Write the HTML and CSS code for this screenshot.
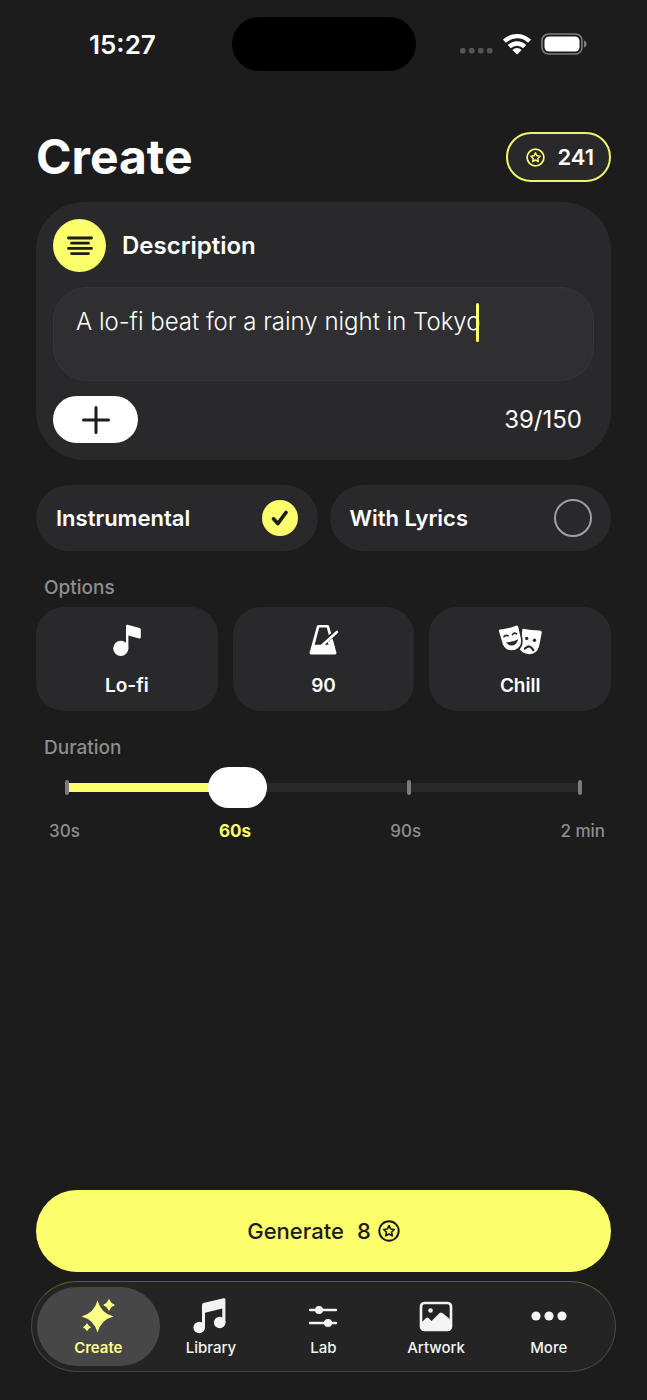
FILE: index.html
```html
<!DOCTYPE html>
<html lang="en">
<head>
<meta charset="utf-8">
<meta name="viewport" content="width=device-width, initial-scale=1">
<title>Create</title>
<link rel="stylesheet" href="styles.css">
</head>
<body>
<svg class="defs" aria-hidden="true">
  <symbol id="coin" viewBox="0 0 22 22">
    <circle cx="11" cy="11" r="9.7" fill="none" stroke="currentColor" stroke-width="2"/>
    <path d="M11 5.600l1.600 3.400 3.700.5-2.700 2.600.7 3.700-3.300-1.900-3.300 1.900.7-3.700-2.700-2.600 3.700-.5z" fill="none" stroke="currentColor" stroke-width="1.700" stroke-linejoin="round"/>
  </symbol>
</svg>
<div class="screen">
  <header class="status">
    <time class="status-time">15:27</time>
    <div class="island"></div>
    <div class="status-icons">
      <svg width="33" height="22" viewBox="0 0 33 22" fill="#555557" aria-hidden="true">
        <rect x="0" y="15" width="5.500" height="5.500" rx="1.800"/><rect x="9" y="15" width="5.500" height="5.500" rx="1.800"/><rect x="18" y="15" width="5.500" height="5.500" rx="1.800"/><rect x="27" y="15" width="5.500" height="5.500" rx="1.800"/>
      </svg>
      <svg width="28" height="22" viewBox="0 0 28 22" aria-hidden="true">
        <g fill="none" stroke="#fff" stroke-width="4.400"><path d="M1.500 8.200a18 18 0 0 1 25 0"/><path d="M6.300 13.600a11 11 0 0 1 15.400 0"/></g>
        <path d="M14 21.600l-4.600-4.600a6.500 6.500 0 0 1 9.200 0z" fill="#fff"/>
      </svg>
      <svg width="46" height="22" viewBox="0 0 46 22" aria-hidden="true">
        <rect x="1" y="1" width="40" height="20" rx="6.500" fill="none" stroke="#7c7c7e" stroke-width="1.600"/>
        <rect x="3.500" y="3.500" width="35" height="15" rx="4.500" fill="#fff"/>
        <path d="M43 7.500c3.500 1 3.500 6 0 7z" fill="#7c7c7e"/>
      </svg>
    </div>
  </header>

  <main class="content">
    <div class="title-row">
      <h1 class="title">Create</h1>
      <button class="credits" type="button"><svg class="coin" aria-hidden="true"><use href="#coin"/></svg>241</button>
    </div>

    <section class="card">
      <label class="card-head" for="prompt">
        <span class="badge"><svg width="26" height="20" viewBox="0 0 26 20" stroke="#1c1c1c" stroke-width="2.800" stroke-linecap="round" aria-hidden="true"><path d="M1.500 2h23M4.500 7.200h17M1.500 12.400h23M4.500 17.600h17"/></svg></span>
        Description
      </label>
      <div class="field">
        <textarea class="prompt" id="prompt" rows="1" maxlength="150" spellcheck="false">A lo-fi beat for a rainy night in Tokyo</textarea>
        <span class="caret"></span>
      </div>
      <div class="card-foot">
        <button class="add" type="button" aria-label="Add"><svg width="28" height="28" viewBox="0 0 28 28" stroke="#1c1c1c" stroke-width="3" stroke-linecap="round" aria-hidden="true"><path d="M14 1.500v25M1.500 14h25"/></svg></button>
        <output class="count" for="prompt">39/150</output>
      </div>
    </section>

    <div class="modes">
      <label class="mode">Instrumental
        <span class="radio-wrap"><input class="radio" type="radio" name="mode" checked><svg class="tick" width="18" height="18" viewBox="0 0 18 18" aria-hidden="true"><path d="M2.500 9.800l4.300 4.800L15 3.500" fill="none" stroke="#1c1c1c" stroke-width="3.600" stroke-linecap="round" stroke-linejoin="round"/></svg></span>
      </label>
      <label class="mode">With Lyrics
        <span class="radio-wrap"><input class="radio" type="radio" name="mode"></span>
      </label>
    </div>

    <h2 class="section-label">Options</h2>
    <div class="options">
      <button class="option" type="button">
        <svg width="46" height="34" viewBox="0 0 46 34" fill="#fff" aria-hidden="true"><circle cx="16.800" cy="25.400" r="7.600"/><path d="M22 3q0-1.500 1.500-1.200l12 3.300q1.300.4 1.300 1.600v7.500q0 1.500-1.500 1.200l-10.900-3v13H22z"/></svg>
        Lo-fi
      </button>
      <button class="option" type="button">
        <svg width="46" height="34" viewBox="0 0 46 34" aria-hidden="true"><path d="M16.800 3.400q.4-1.400 2-1.400h8.400q1.600 0 2 1.400l7.200 26.200q.3 1.900-1.500 1.900H11.100q-1.800 0-1.500-1.900z" fill="#fff"/><path d="M19.200 4.600h7.600l4.500 17.200H14.700z" fill="#29292b"/><path d="M24.500 19.200L36.500 9" stroke="#29292b" stroke-width="5"/><path d="M22 22.500L37 9" stroke="#fff" stroke-width="2.600" stroke-linecap="round"/><path d="M32 16l2.500 8h-5.200l-1.600-5z" fill="#fff"/></svg>
        90
      </button>
      <button class="option" type="button">
        <svg width="46" height="34" viewBox="0 0 46 34" aria-hidden="true">
          <path d="M25.500 5.700q9 1.600 17 1.700 2.600.1 2.200 2.600l-2.600 13.300q-2 7.500-9.500 7.900-6.300-.1-9.600-4.700z" fill="#fff"/>
          <circle cx="29.700" cy="15.400" r="1.700" fill="#29292b"/><circle cx="37.500" cy="17.300" r="1.700" fill="#29292b"/>
          <path d="M28 25.600q4.600-5 8.300 1.500" fill="none" stroke="#29292b" stroke-width="2.200" stroke-linecap="round"/>
          <path d="M3 5.700q8.300-.7 15.500-3.700 2.900-1 3.500 1.600l2.800 12.600q1 8.700-6.500 11.300-9 2.300-13-5.500L1.200 8.500q-.4-2.500 1.800-2.800z" fill="#fff" stroke="#29292b" stroke-width="1.600"/>
          <path d="M7 13.700q1.500-2.300 4-.9M15.500 11.600q1.500-2.300 4-.8" fill="none" stroke="#29292b" stroke-width="1.700" stroke-linecap="round"/>
          <path d="M9 19.200q6.500.5 12-3-1 5.400-5.300 6.300-4.500.6-6.700-3.300z" fill="#29292b"/>
        </svg>
        Chill
      </button>
    </div>

    <h2 class="section-label"><label for="duration">Duration</label></h2>
    <div class="slider">
      <div class="ticks"><i class="mark"></i><i class="mark"></i><i class="mark"></i><i class="mark"></i></div>
      <input class="range" id="duration" type="range" min="0" max="3" step="1" value="1">
    </div>
    <div class="scale"><span>30s</span><span class="scale-on">60s</span><span>90s</span><span>2 min</span></div>
  </main>

  <button class="generate" type="button">Generate <span class="cost">8<svg class="coin coin-lg" aria-hidden="true"><use href="#coin"/></svg></span></button>

  <nav class="tabs">
    <a class="tab tab-on" href="#create"><svg width="36" height="36" viewBox="0 0 36 36" fill="currentColor" aria-hidden="true"><path d="M17.500 2.500q3.500 12.800 16 16-12.500 3.200-16 16-3.500-12.800-16-16 12.500-3.200 16-16z"/><path d="M29 0q1.900 5.400 7 7-5.100 1.600-7 7-1.900-5.400-7-7 5.100-1.600 7-7zM7 24.200q1.400 3.600 5 5-3.600 1.400-5 5-1.400-3.600-5-5 3.600-1.400 5-5z" stroke="#474747" stroke-width="1"/></svg>Create</a>
    <a class="tab" href="#library"><svg width="36" height="36" viewBox="0 0 36 36" fill="currentColor" aria-hidden="true"><circle cx="6.200" cy="29.500" r="5.800"/><circle cx="26.700" cy="24.500" r="5.800"/><path d="M9 29V7q0-1.600 1.500-2L30.700.300q1.700-.3 1.700 1.200V24.500h-3.100V10.500L12 14.700V29z"/></svg>Library</a>
    <a class="tab" href="#lab"><svg width="36" height="36" viewBox="0 0 36 36" fill="currentColor" aria-hidden="true"><path d="M5 12h26M5 25h26" stroke="currentColor" stroke-width="2.400" stroke-linecap="round"/><circle cx="14" cy="12" r="4"/><circle cx="23" cy="25" r="4"/></svg>Lab</a>
    <a class="tab" href="#artwork"><svg width="36" height="36" viewBox="0 0 36 36" aria-hidden="true"><rect x="3" y="5" width="30" height="27" rx="3.500" fill="none" stroke="currentColor" stroke-width="2.600"/><circle cx="12.500" cy="12.500" r="2.300" fill="currentColor"/><path d="M3 25l5-5q1.200-1 2.400 0l3.200 3.100 8-8q1.400-1.200 2.800 0L33 22v7q0 3-3 3H6q-3 0-3-3z" fill="currentColor"/></svg>Artwork</a>
    <a class="tab" href="#more"><svg width="36" height="36" viewBox="0 0 36 36" fill="currentColor" aria-hidden="true"><circle cx="5" cy="18" r="4.600"/><circle cx="18" cy="18" r="4.600"/><circle cx="31" cy="18" r="4.600"/></svg>More</a>
  </nav>
</div>
</body>
</html>
```
FILE: styles.css
```css
* { box-sizing: border-box; }

body {
  margin: 0;
  background: #1c1c1c;
  color: #fff;
  font-family: Inter, "Liberation Sans", sans-serif;
}

button, textarea, input {
  font: inherit;
  color: inherit;
  margin: 0;
}

button { border: 0; cursor: pointer; }

svg { display: block; flex: none; }

.defs { position: absolute; width: 0; height: 0; }

.screen {
  min-height: 100vh;
  display: flex;
  flex-direction: column;
  padding: 0 36px 28px;
}

/* Status bar */
.status {
  display: grid;
  grid-template-columns: 1fr 184px 1fr;
  align-items: center;
  height: 88px;
}
.status-time {
  justify-self: start;
  padding-left: 53px;
  font-size: 26px;
  font-weight: 600;
}
.island {
  height: 54px;
  border-radius: 27px;
  background: #000;
}
.status-icons {
  justify-self: end;
  display: flex;
  gap: 10px;
  padding-right: 24px;
}

/* Header */
.title-row {
  display: flex;
  justify-content: space-between;
  align-items: center;
  margin: 44px 0 20px;
}
.title {
  margin: 0;
  font-size: 48px;
  line-height: 50px;
  font-weight: 700;
}
.credits {
  display: flex;
  align-items: center;
  gap: 12px;
  height: 50px;
  padding: 0 15px 0 18px;
  border: 2px solid #f1f36b;
  border-radius: 25px;
  background: #29292b;
  font-size: 22px;
  font-weight: 600;
}
.coin { width: 19px; height: 19px; color: #fcfe6c; }
.coin-lg { width: 22px; height: 22px; color: #1c1c1c; }

/* Description card */
.card {
  display: flex;
  flex-direction: column;
  gap: 15px;
  padding: 17px;
  border-radius: 48px;
  background: #29292b;
}
.card-head {
  display: flex;
  align-items: center;
  gap: 16px;
  font-size: 24px;
  font-weight: 600;
}
.badge {
  display: grid;
  place-items: center;
  width: 53px;
  height: 53px;
  border-radius: 50%;
  background: #fcfe6c;
}
.field {
  position: relative;
  height: 94px;
  padding: 19px 22px;
  border: 1px solid #373739;
  border-radius: 34px;
  background: #2f2f31;
}
.prompt {
  display: block;
  width: 100%;
  padding: 0;
  border: 0;
  outline: 0;
  resize: none;
  background: none;
  font-size: 24px;
  font-weight: 300;
  line-height: 30px;
  caret-color: #fcfe6c;
}
.caret {
  position: absolute;
  top: 15px;
  left: 422px;
  width: 3px;
  height: 39px;
  border-radius: 2px;
  background: #fcfe6c;
}
.card-foot {
  display: flex;
  justify-content: space-between;
  align-items: center;
  padding-right: 12px;
}
.add {
  display: grid;
  place-items: center;
  width: 85px;
  height: 47px;
  padding: 0;
  border-radius: 24px;
  background: #fff;
}
.count { font-size: 24px; }

/* Mode radios */
.modes {
  display: grid;
  grid-template-columns: 1fr 1fr;
  gap: 12px;
  margin-top: 25px;
}
.mode {
  display: flex;
  justify-content: space-between;
  align-items: center;
  height: 66px;
  padding: 0 19px 0 20px;
  border-radius: 33px;
  background: #29292b;
  font-size: 22px;
  font-weight: 600;
}
.radio-wrap { display: grid; place-items: center; }
.radio, .tick { grid-area: 1 / 1; }
.tick { position: relative; pointer-events: none; }
.radio {
  appearance: none;
  width: 38px;
  height: 38px;
  border: 2px solid #a0a0a2;
  border-radius: 50%;
}
.radio:checked {
  border: 1px solid transparent;
  background: #fcfe6c padding-box;
}

/* Options */
.section-label {
  margin: 26px 0 8px 8px;
  font-size: 19px;
  line-height: 22px;
  font-weight: 500;
  color: #8e8e90;
}
.options {
  display: grid;
  grid-template-columns: repeat(3, 1fr);
  gap: 15px;
}
.option {
  display: flex;
  flex-direction: column;
  align-items: center;
  gap: 17px;
  height: 104px;
  padding: 16px 0 0;
  border-radius: 28px;
  background: #29292b;
  font-size: 19px;
  line-height: 24px;
  font-weight: 600;
}

/* Duration slider */
.slider { display: grid; align-items: center; }
.ticks, .range { grid-area: 1 / 1; }
.ticks {
  display: flex;
  justify-content: space-between;
  align-items: center;
  margin: 0 29px;
  height: 9px;
  background: linear-gradient(90deg, #fcfe6c 33%, #29292b 33%);
}
.mark {
  width: 4px;
  height: 15px;
  border-radius: 2px;
  background: #7c7c7e;
}
.range {
  appearance: none;
  position: relative;
  width: 100%;
  height: 41px;
  background: none;
}
.range::-webkit-slider-thumb {
  appearance: none;
  width: 59px;
  height: 41px;
  border-radius: 21px;
  background: #fff;
}
.scale {
  display: flex;
  justify-content: space-between;
  margin: 12px 6px 0 13px;
  font-size: 17px;
  line-height: 22px;
  font-weight: 500;
  color: #8e8e90;
}
.scale-on { color: #fcfe6c; font-weight: 700; }

/* Bottom actions */
.generate {
  display: flex;
  justify-content: center;
  align-items: center;
  gap: 13px;
  height: 82px;
  margin-top: auto;
  border-radius: 41px;
  background: #fcfe6c;
  color: #1c1c1c;
  font-size: 22px;
  font-weight: 500;
}
.cost { display: flex; align-items: center; gap: 7px; }

.tabs {
  display: grid;
  grid-template-columns: repeat(5, 1fr);
  margin: 9px -5px 0;
  padding: 5px 10px;
  border: 1px solid #454545;
  border-top-color: #5e5e26;
  border-radius: 46px;
  background: #242424;
}
.tab {
  display: flex;
  flex-direction: column;
  align-items: center;
  gap: 4px;
  height: 79px;
  padding-top: 11px;
  border-radius: 40px;
  color: #f4f4f4;
  font-size: 15px;
  line-height: 20px;
  font-weight: 500;
  text-decoration: none;
}
.tab-on {
  margin: 0 -5px;
  background: #474747;
  color: #fdfe86;
  font-weight: 600;
}
```
